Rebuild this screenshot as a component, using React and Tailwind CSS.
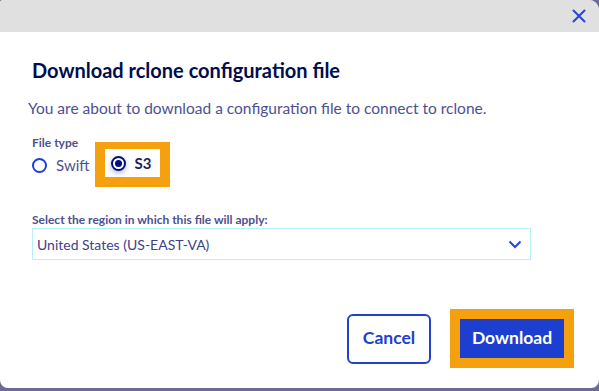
import React from "react";

export default function App() {
  return (
    <div className="w-[599px] h-[391px] bg-[#6d6a97] overflow-hidden" style={{ fontFamily: "Lato, 'Noto Sans', sans-serif" }}>
      <div className="h-[388px] bg-white rounded-tl-[3px] rounded-tr-[10px] rounded-b-[8px] overflow-hidden flex flex-col">
        <div className="h-[32px] bg-[#e0e0e0] flex justify-end items-center pr-[13px] shrink-0">
          <svg width="14" height="14" viewBox="0 0 14 14">
            <path d="M1.5 1.5 L12.5 12.5 M12.5 1.5 L1.5 12.5" stroke="#2745d6" strokeWidth="2" strokeLinecap="round" />
          </svg>
        </div>
        <div className="pl-[32px] pr-[69px] flex flex-col">
          <h1 className="mt-[26px] text-[20px] leading-[24px] font-bold text-[#000d4f]">Download rclone configuration file</h1>
          <p className="mt-[16px] text-[15.5px] leading-[20px] text-[#4d5190] -ml-[4px]">You are about to download a configuration file to connect to rclone.</p>
          <div className="mt-[19px] text-[12px] leading-[12px] font-bold text-[#4d5190]">File type</div>
          <div className="flex items-start -mt-[7px]">
            <label className="flex items-center gap-[9px] mt-[15px]">
              <span className="w-[15px] h-[15px] rounded-full border-2 border-[#2140d0] bg-white" />
              <span className="text-[15px] leading-[16px] text-[#4d5190]">Swift</span>
            </label>
            <div className="ml-[5px] bg-[#f5a00f] w-[75px] h-[45px] pl-[10px] pt-[7px]">
              <div className="bg-white flex items-center w-[55px] h-[28px] pl-[6px]">
                <span className="w-[15px] h-[15px] rounded-full border-2 border-[#000d80] bg-white flex items-center justify-center shadow-[0_2px_5px_rgba(40,40,120,0.35)]">
                  <span className="w-[7px] h-[7px] rounded-full bg-[#000d80]" />
                </span>
                <span className="ml-[9px] text-[15px] font-bold text-[#1a1f6b]">S3</span>
              </div>
            </div>
          </div>
          <div className="mt-[27px] text-[12px] leading-[12px] font-bold text-[#4d5190]">Select the region in which this file will apply:</div>
          <div className="mt-[2px] h-[32px] w-[499px] border border-[#b8eef8] flex items-center justify-between pl-[4px] pr-[8px]">
            <span className="text-[14px] text-[#3d4389]">United States (US-EAST-VA)</span>
            <svg width="14" height="9" viewBox="0 0 14 9">
              <path d="M1.5 1.5 L7 7 L12.5 1.5" stroke="#2745d6" strokeWidth="2" fill="none" />
            </svg>
          </div>
        </div>
        <div className="mt-auto mb-[20px] flex justify-end items-center pr-[25px]">
          <button className="w-[84px] h-[50px] rounded-[6px] border-2 border-[#2140d0] bg-white text-[#2140d0] font-bold text-[17.5px]">Cancel</button>
          <div className="ml-[19px] bg-[#f5a00f] p-[10px]">
            <button className="w-[104px] h-[39px] bg-[#1c3fcf] text-white font-bold text-[17.5px]">Download</button>
          </div>
        </div>
      </div>
    </div>
  );
}
